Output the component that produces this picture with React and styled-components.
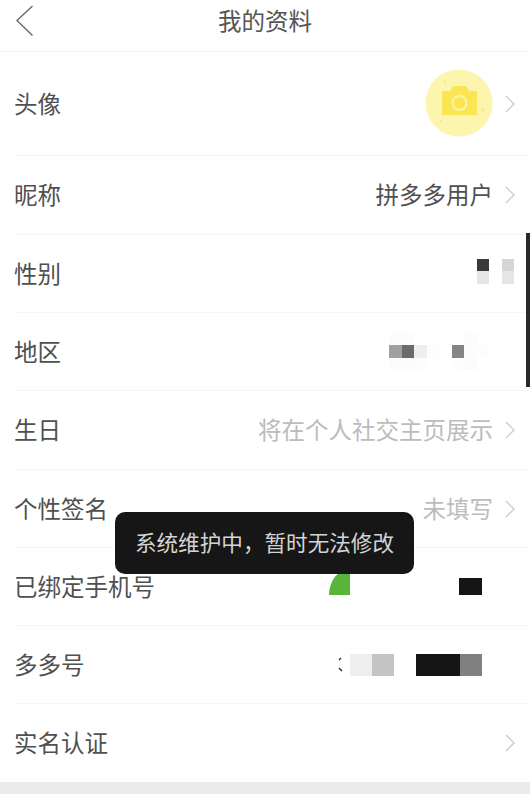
import styled, { createGlobalStyle } from 'styled-components';

const GlobalStyle = createGlobalStyle`
  html, body {
    margin: 0;
    background: #fff;
  }
  body {
    font-family: "Liberation Sans", "Noto Sans CJK SC", sans-serif;
  }
`;

const Page = styled.div`
  position: relative;
  width: 530px;
  height: 800px;
  overflow: hidden;
  background: #fff;
`;

const Header = styled.header`
  display: grid;
  grid-template-columns: 1fr auto 1fr;
  align-items: center;
  height: 51px;
  padding-left: 15px;
  padding-right: 15px;
  border-bottom: 1px solid #f3f3f3;
`;

const Title = styled.h1`
  margin: 0 0 11px;
  font-size: 23.5px;
  font-weight: 400;
  color: #555;
`;

const BackIcon = styled.svg`
  display: block;
  width: 20px;
  height: 34px;
  margin-top: -10px;
`;

const List = styled.div`
  display: flex;
  flex-direction: column;
`;

const Row = styled.div`
  display: flex;
  align-items: center;
  justify-content: space-between;
  height: ${(p) => p.$height}px;
  margin-left: 14px;
  padding-right: 15px;
  box-sizing: border-box;
  border-bottom: ${(p) => (p.$last ? 'none' : '1px solid #f6f6f6')};
`;

const Label = styled.span`
  font-size: 23.5px;
  margin-bottom: 2px;
  color: #505050;
`;

const Right = styled.div`
  display: flex;
  align-items: center;
  gap: 12px;
`;

const Value = styled.span`
  font-size: 23.5px;
  margin-bottom: 2px;
  color: ${(p) => (p.$muted ? '#bcbcbc' : '#505050')};
`;

const Chevron = styled.svg`
  display: block;
  width: 10px;
  height: 18px;
`;

const Avatar = styled.svg`
  display: block;
  width: 68px;
  height: 68px;
  margin-bottom: 2px;
`;

const Mosaic = styled.div`
  display: grid;
  grid-template-columns: repeat(${(p) => p.$cols}, ${(p) => p.$size}px);
  grid-auto-rows: ${(p) => p.$rowSize || p.$size}px;
  margin-right: ${(p) => p.$inset}px;
  margin-top: ${(p) => p.$shift || 0}px;
`;

const Cell = styled.i`
  display: block;
  background: ${(p) => p.$color};
`;

const PhoneValue = styled.div`
  display: flex;
  align-items: flex-end;
  gap: 109px;
  margin-right: 33px;
  margin-top: -10px;
`;

const GreenBadge = styled.div`
  width: 21px;
  height: 26px;
  background: #58b53a;
  border-top-left-radius: 100% 100%;
`;

const BlackBlock = styled.div`
  width: 23px;
  height: 17px;
  background: #151515;
`;

const IdValue = styled.div`
  display: flex;
  align-items: center;
  margin-right: 33px;
`;

const IdMark = styled.svg`
  display: block;
  width: 8px;
  height: 18px;
  margin-right: 5px;
`;

const IdGroup = styled.div`
  display: flex;
  margin-right: ${(p) => p.$gap || 0}px;
`;

const IdCell = styled.i`
  display: block;
  width: 22px;
  height: 22px;
  background: ${(p) => p.$color};
`;

const Band = styled.div`
  height: 12px;
  background: #ebebeb;
`;

const Toast = styled.div`
  position: absolute;
  left: 115px;
  top: 512px;
  width: 299px;
  height: 62px;
  padding-bottom: 4px;
  box-sizing: border-box;
  display: flex;
  align-items: center;
  justify-content: center;
  border-radius: 10px;
  background: #161616;
  color: #d4d4d4;
  font-size: 21.6px;
`;

const ScrollBar = styled.div`
  position: absolute;
  top: 233px;
  right: 0;
  width: 4px;
  height: 154px;
  background: #2a2a2a;
`;

function Arrow() {
  return (
    <Chevron viewBox="0 0 10 18" fill="none">
      <path d="M1 1 L9 9 L1 17" stroke="#cfcfcf" strokeWidth="1.5" />
    </Chevron>
  );
}

const genderCells = ['#3a3a3a', '#fff', '#d6d6d6', '#e6e6e6', '#fff', '#e6e6e6'];
const regionCells = [
  '#fcfcfc', '#fcfcfc', '#fff', '#fff', '#fff', '#fff', '#fcfcfc', '#fff',
  '#a0a0a0', '#6a6a6a', '#eeeeee', '#fdfdfd', '#fff', '#858585', '#fcfcfc', '#fdfdfd',
  '#fcfcfc', '#fcfcfc', '#fdfdfd', '#fff', '#fff', '#fdfdfd', '#fbfbfb', '#fff',
];

export default function App() {
  return (
    <Page>
      <GlobalStyle />
      <Header>
        <BackIcon viewBox="0 0 20 34" fill="none">
          <path d="M17.5 2 L2 16.5 L17.5 31.5" stroke="#6a6a6a" strokeWidth="1.4" />
        </BackIcon>
        <Title>我的资料</Title>
      </Header>
      <List>
        <Row $height={104}>
          <Label>头像</Label>
          <Right>
            <Avatar viewBox="0 0 68 68">
              <circle cx="34" cy="34" r="33.5" fill="#fbf5ad" />
              <path
                d="M17 22 H25 L28 17 H41 L44 22 H52 V46 H17 Z"
                fill="#fbe555"
              />
              <circle cx="34.5" cy="34" r="7" fill="none" stroke="#fdf3a4" strokeWidth="2" />
              <circle cx="20" cy="13" r="1.5" fill="#f9ec8a" />
              <circle cx="58" cy="41" r="2" fill="#f9ec8a" />
              <circle cx="16" cy="52" r="1.2" fill="#f9ec8a" />
            </Avatar>
            <Arrow />
          </Right>
        </Row>
        <Row $height={79}>
          <Label>昵称</Label>
          <Right>
            <Value>拼多多用户</Value>
            <Arrow />
          </Right>
        </Row>
        <Row $height={78}>
          <Label>性别</Label>
          <Mosaic $cols={3} $size={12.5} $inset={1} $shift={-5}>
            {genderCells.map((c, i) => (
              <Cell key={i} $color={c} />
            ))}
          </Mosaic>
        </Row>
        <Row $height={78}>
          <Label>地区</Label>
          <Mosaic $cols={8} $size={12.5} $inset={26}>
            {regionCells.map((c, i) => (
              <Cell key={i} $color={c} />
            ))}
          </Mosaic>
        </Row>
        <Row $height={79}>
          <Label>生日</Label>
          <Right>
            <Value $muted>将在个人社交主页展示</Value>
            <Arrow />
          </Right>
        </Row>
        <Row $height={78}>
          <Label>个性签名</Label>
          <Right>
            <Value $muted>未填写</Value>
            <Arrow />
          </Right>
        </Row>
        <Row $height={78}>
          <Label>已绑定手机号</Label>
          <PhoneValue>
            <GreenBadge />
            <BlackBlock />
          </PhoneValue>
        </Row>
        <Row $height={78}>
          <Label>多多号</Label>
          <IdValue>
            <IdMark viewBox="0 0 8 18" fill="none">
              <path d="M4 2 L2 4 M2 12 L5 15" stroke="#333" strokeWidth="1.5" />
            </IdMark>
            <IdGroup $gap={22}>
              <IdCell $color="#eeeeee" />
              <IdCell $color="#c4c4c4" />
            </IdGroup>
            <IdGroup>
              <IdCell $color="#151515" />
              <IdCell $color="#151515" />
              <IdCell $color="#808080" />
            </IdGroup>
          </IdValue>
        </Row>
        <Row $height={78} $last>
          <Label>实名认证</Label>
          <Arrow />
        </Row>
        <Band />
      </List>
      <Toast>系统维护中，暂时无法修改</Toast>
      <ScrollBar />
    </Page>
  );
}
